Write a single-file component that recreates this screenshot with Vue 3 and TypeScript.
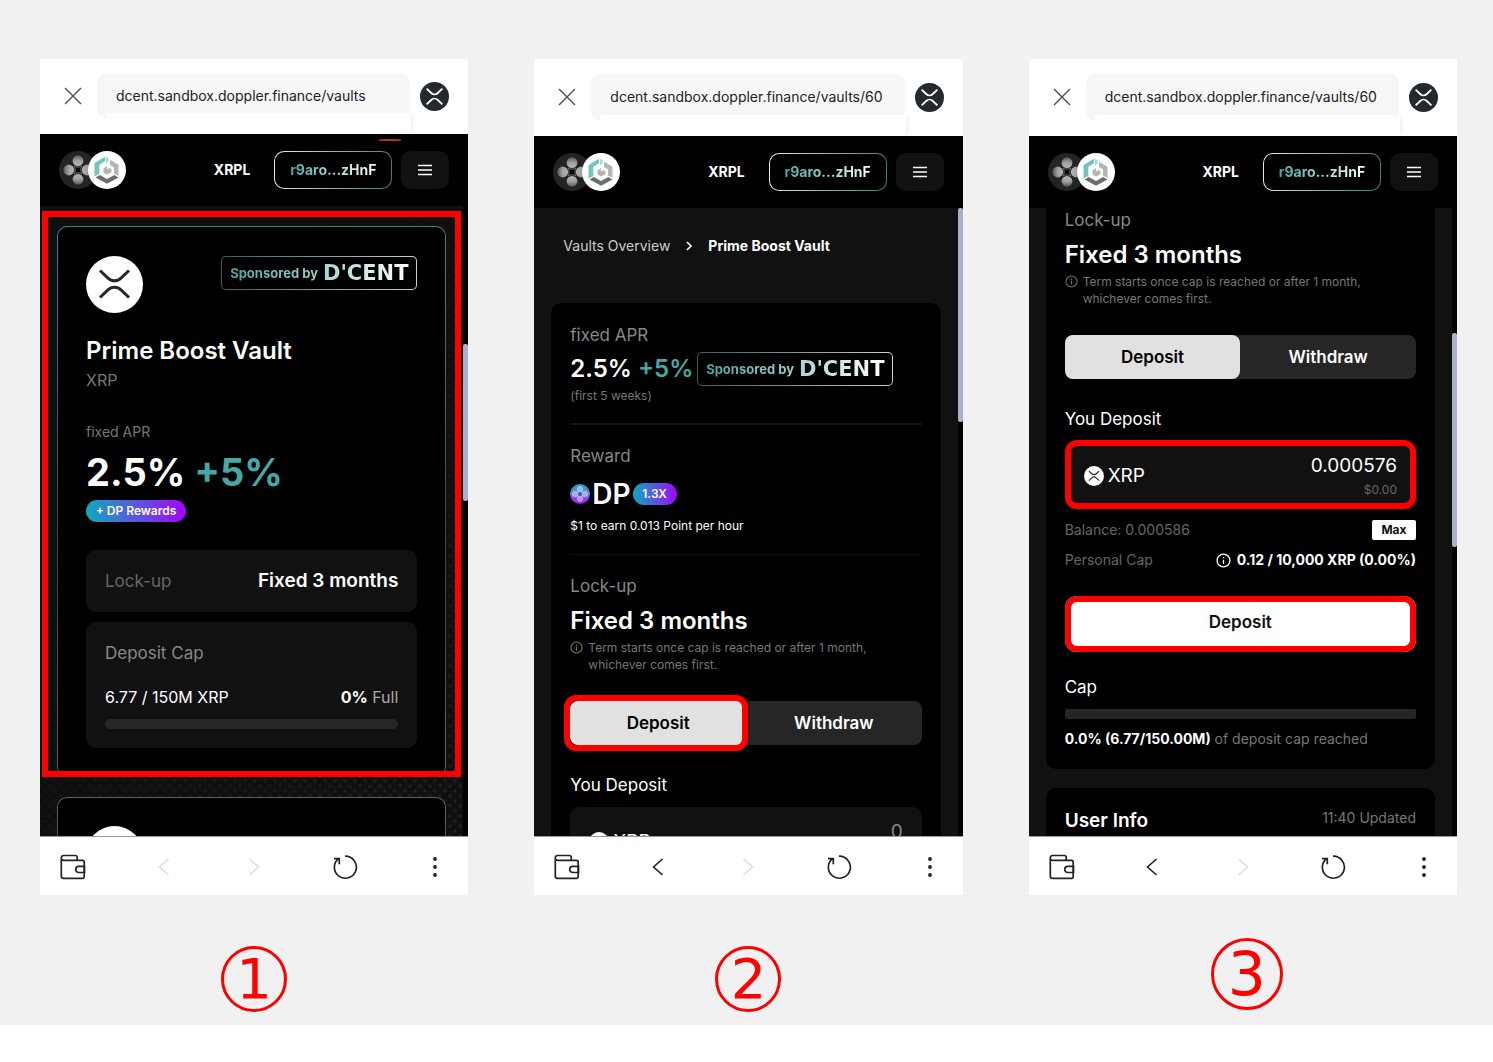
<script setup lang="ts">
interface Phone {
  id: number
  url: string
  canGoBack: boolean
  thumb: { top: number; height: number }
}

const phones: Phone[] = [
  { id: 1, url: 'dcent.sandbox.doppler.finance/vaults', canGoBack: false, thumb: { top: 138, height: 157 } },
  { id: 2, url: 'dcent.sandbox.doppler.finance/vaults/60', canGoBack: true, thumb: { top: 0, height: 214 } },
  { id: 3, url: 'dcent.sandbox.doppler.finance/vaults/60', canGoBack: true, thumb: { top: 125, height: 214 } },
]
</script>

<template>
  <main class="board">
    <section v-for="p in phones" :key="p.id" class="step">
      <div class="phone" :class="'phone-' + p.id">
        <div class="urlbar">
          <button class="plain close" aria-label="Close">
            <svg width="18" height="18" viewBox="0 0 18 18"><path d="M1 1l16 16M17 1L1 17" stroke="#4a4d52" stroke-width="1.4" fill="none" /></svg>
          </button>
          <input class="url" type="text" :value="p.url" readonly aria-label="Address" />
          <span class="flap"></span>
          <svg class="net" viewBox="0 0 57 57" role="img" aria-label="XRP Ledger">
            <circle cx="28.500" cy="28.500" r="28.500" fill="#23292f" />
            <path d="M13 13l9 8.600c3.600 3.600 9.400 3.600 13 0l9-8.600M13 44l9-8.600c3.600-3.600 9.400-3.600 13 0l9 8.600" fill="none" stroke="#fff" stroke-width="3.600" />
          </svg>
        </div>

        <header class="appbar">
          <span v-if="p.id === 1" class="alert"></span>
          <div class="logos">
            <svg width="38" height="38" viewBox="0 0 38 38">
              <defs>
                <radialGradient :id="'petal' + p.id" cx="19" cy="19" r="16" gradientUnits="userSpaceOnUse">
                  <stop offset="0.200" stop-color="#b8b8b8" />
                  <stop offset="0.600" stop-color="#a0a0a0" />
                  <stop offset="1" stop-color="#444" />
                </radialGradient>
              </defs>
              <circle cx="19" cy="19" r="19" fill="#242424" />
              <g :fill="'url(#petal' + p.id + ')'">
                <circle cx="19" cy="9.700" r="5.400" />
                <circle cx="19" cy="28.300" r="5.400" />
                <circle cx="9.700" cy="19" r="5.400" />
                <circle cx="28.300" cy="19" r="5.400" />
              </g>
              <path d="M15 15c2 1.600 6 1.600 8 0-1.600 2-1.600 6 0 8-2-1.600-6-1.600-8 0 1.600-2 1.600-6 0-8z" fill="#080808" stroke="#777" stroke-width="0.800" />
            </svg>
            <svg class="dcent-logo" width="38" height="38" viewBox="0 0 38 38">
              <circle cx="19" cy="19" r="19" fill="#fff" />
              <path d="M6.500 12L17 5.700v4.600l-5.700 3.500V23l-4.800 2.500z" fill="#74c3c0" />
              <path d="M17.800 5.800l2.700 1.200v3.800l-2.700 1.600z" fill="#a5d8d5" />
              <path d="M22 8.800l8.500 4.900V25L26 22.600v-6.400l-4-2.300z" fill="#b4b4b6" />
              <path d="M7.500 26.500l4.300-2.400 7.200 4 7.200-4 4.300 2.400L19 32.700z" fill="#6c6d70" />
              <path d="M15.500 17.200l3.500-2.100v3.300l2.500-1.400 2 1.200v3L19 23.600l-3.500-2z" fill="#b4b4b6" />
            </svg>
          </div>
          <span class="chain">XRPL</span>
          <button class="wallet"><span>r9aro...zHnF</span></button>
          <button class="menu" aria-label="Menu">
            <svg width="16" height="12" viewBox="0 0 16 12"><path d="M1 1.500h14M1 6h14M1 10.500h14" stroke="#fff" stroke-width="1.700" /></svg>
          </button>
        </header>

        <div class="viewport">
          <div v-if="p.id === 1" class="page dotted">
            <article class="vault">
              <div class="vault-head">
                <svg class="coin" viewBox="0 0 57 57">
                  <circle cx="28.500" cy="28.500" r="28.500" fill="#fff" />
                  <path d="M14 14.500l8 7.600c3.600 3.600 9.400 3.600 13 0l8-7.600M14 41.500l8-7.600c3.600-3.600 9.400-3.600 13 0l8 7.600" fill="none" stroke="#23292f" stroke-width="3" />
                </svg>
                <span class="sponsor"><span class="sponsor-text">Sponsored by <b>D'CENT</b></span></span>
              </div>
              <h2>Prime Boost Vault</h2>
              <p class="asset">XRP</p>
              <p class="apr-label">fixed APR</p>
              <p class="apr-big">2.5% <em>+5%</em></p>
              <span class="chip">+ DP Rewards</span>
              <div class="box lock-box">
                <span>Lock-up</span>
                <strong>Fixed 3 months</strong>
              </div>
              <div class="box cap-box">
                <span>Deposit Cap</span>
                <div class="cap-row">
                  <span class="cap-amount">6.77 / 150M XRP</span>
                  <span class="cap-full"><b>0%</b> Full</span>
                </div>
                <div class="bar round"></div>
              </div>
              <span class="mark mark-card"></span>
            </article>
            <article class="vault next-vault">
              <svg class="coin" viewBox="0 0 57 57"><circle cx="28.500" cy="28.500" r="28.500" fill="#fff" /></svg>
            </article>
          </div>

          <div v-else class="page">
            <nav v-if="p.id === 2" class="crumbs" aria-label="Breadcrumb">
              <a href="#">Vaults Overview</a>
              <svg width="8" height="12" viewBox="0 0 8 12"><path d="M2 2l4 4-4 4" fill="none" stroke="#fff" stroke-width="1.600" /></svg>
              <strong>Prime Boost Vault</strong>
            </nav>

            <article class="panel" :class="{ scrolled: p.id === 3 }">
              <template v-if="p.id === 2">
                <p class="label">fixed APR</p>
                <div class="apr-row">
                  <p class="apr-mid">2.5% <em>+5%</em></p>
                  <span class="sponsor"><span class="sponsor-text">Sponsored by <b>D'CENT</b></span></span>
                </div>
                <p class="weeks">(first 5 weeks)</p>
                <hr class="thick" />
                <p class="label">Reward</p>
                <div class="dp-row">
                  <svg width="20" height="20" viewBox="0 0 20 20">
                    <defs>
                      <linearGradient id="dp" x1="0" y1="0" x2="0" y2="1">
                        <stop offset="0" stop-color="#1fa9c4" />
                        <stop offset="0.500" stop-color="#6d7be0" />
                        <stop offset="1" stop-color="#a50cf5" />
                      </linearGradient>
                    </defs>
                    <circle cx="10" cy="10" r="10" fill="url(#dp)" />
                    <g fill="#ffffff66" stroke="#ffffff88" stroke-width="0.600">
                      <circle cx="10" cy="5.200" r="2.800" />
                      <circle cx="10" cy="14.800" r="2.800" />
                      <circle cx="5.200" cy="10" r="2.800" />
                      <circle cx="14.800" cy="10" r="2.800" />
                    </g>
                    <path d="M10 8l2 2-2 2-2-2z" fill="#3f4fb4" />
                  </svg>
                  <strong>DP</strong>
                  <span class="chip chip-x">1.3X</span>
                </div>
                <p class="earn">$1 to earn 0.013 Point per hour</p>
                <hr />
              </template>

              <p class="label">Lock-up</p>
              <h3>Fixed 3 months</h3>
              <div class="term">
                <svg width="13" height="13" viewBox="0 0 14 14" fill="none" stroke="#777" stroke-width="1.100"><circle cx="7" cy="7" r="6" /><path d="M7 6.200v4M7 3.700v1.300" /></svg>
                <p>Term starts once cap is reached or after 1 month, whichever comes first.</p>
              </div>

              <div class="tabs" role="tablist">
                <button role="tab" aria-selected="true" class="tab on">Deposit<span v-if="p.id === 2" class="mark mark-tab"></span></button>
                <button role="tab" aria-selected="false" class="tab">Withdraw</button>
              </div>

              <label class="you" :for="'amount' + p.id">You Deposit</label>
              <div class="field">
                <svg class="mini" viewBox="0 0 57 57">
                  <circle cx="28.500" cy="28.500" r="28.500" fill="#fff" />
                  <path d="M14 14.500l8 7.600c3.600 3.600 9.400 3.600 13 0l8-7.600M14 41.500l8-7.600c3.600-3.600 9.400-3.600 13 0l8 7.600" fill="none" stroke="#23292f" stroke-width="3.400" />
                </svg>
                <span class="ticker">XRP</span>
                <div class="amount">
                  <input :id="'amount' + p.id" type="text" inputmode="decimal" placeholder="0" :value="p.id === 3 ? '0.000576' : ''" />
                  <small><template v-if="p.id === 3">$0.00</template></small>
                </div>
                <span v-if="p.id === 3" class="mark mark-field"></span>
              </div>

              <template v-if="p.id === 3">
                <div class="line">
                  <span>Balance: 0.000586</span>
                  <button class="max">Max</button>
                </div>
                <div class="line">
                  <span>Personal Cap</span>
                  <strong>
                    <svg width="15" height="15" viewBox="0 0 14 14" fill="none" stroke="#fff" stroke-width="1.200"><circle cx="7" cy="7" r="6" /><path d="M7 6.200v4M7 3.700v1.300" /></svg>
                    0.12 / 10,000 XRP (0.00%)
                  </strong>
                </div>
                <button class="submit">Deposit<span class="mark"></span></button>
                <p class="cap-title">Cap</p>
                <div class="bar"></div>
                <p class="reached"><b>0.0% (6.77/150.00M)</b> of deposit cap reached</p>
              </template>
            </article>

            <article v-if="p.id === 3" class="panel user">
              <h4>User Info</h4>
              <span>11:40 Updated</span>
            </article>
          </div>

          <div class="track">
            <div class="thumb" :style="{ marginTop: p.thumb.top + 'px', height: p.thumb.height + 'px' }"></div>
          </div>
        </div>

        <nav class="toolbar" aria-label="Browser">
          <button class="plain" aria-label="Wallet">
            <svg width="26" height="26" viewBox="0 0 26 26" fill="none" stroke="#222" stroke-width="1.700">
              <path d="M17.200 6V3.200a1.700 1.700 0 0 0-1.700-1.700H3.500a2.200 2.200 0 0 0-2.200 2.200v18.500a2.200 2.200 0 0 0 2.200 2.200h19a1.700 1.700 0 0 0 1.700-1.700V8a1.700 1.700 0 0 0-1.700-1.700H3.500A2.200 2.200 0 0 1 1.300 4.500" />
              <path d="M24.500 12.300h-5.700a3.100 3.100 0 0 0 0 6.200h5.700z" />
            </svg>
          </button>
          <button class="plain" aria-label="Back" :disabled="!p.canGoBack">
            <svg width="26" height="26" viewBox="0 0 26 26" fill="none" :stroke="p.canGoBack ? '#222' : '#ddd'" stroke-width="1.600"><path d="M17.500 5l-9 8 9 8" /></svg>
          </button>
          <button class="plain" aria-label="Forward" disabled>
            <svg width="26" height="26" viewBox="0 0 26 26" fill="none" stroke="#ddd" stroke-width="1.600"><path d="M8.500 5l9 8-9 8" /></svg>
          </button>
          <button class="plain" aria-label="Reload">
            <svg width="26" height="26" viewBox="0 0 26 26" fill="none" stroke="#222" stroke-width="1.700">
              <path d="M13 2.200A11 11 0 1 1 6.500 4.600M2 4.600h5.300v5.600" />
            </svg>
          </button>
          <button class="plain" aria-label="More">
            <svg width="26" height="26" viewBox="0 0 26 26" fill="#222"><circle cx="13" cy="5" r="1.900" /><circle cx="13" cy="13" r="1.900" /><circle cx="13" cy="21" r="1.900" /></svg>
          </button>
        </nav>
      </div>
      <div class="number-row"><span class="number" :class="{ large: p.id === 3 }">{{ p.id }}</span></div>
    </section>
  </main>
</template>

<style>
body {
  margin: 0;
  background: #fff;
}
</style>

<style scoped>
* {
  box-sizing: border-box;
}
p,
h2,
h3,
h4 {
  margin: 0;
}
svg {
  display: block;
  flex: none;
}
button,
input {
  font: inherit;
  color: inherit;
  border: 0;
  padding: 0;
  margin: 0;
  background: none;
}
em {
  font-style: normal;
  color: #46a8a6;
}
.board {
  display: flex;
  gap: 66px;
  padding: 59px 36px 13px 40px;
  background: #f1f1f1;
  font-family: Inter, 'Noto Sans', sans-serif;
  font-size: 17px;
  line-height: 20px;
  color: #fff;
}
.step {
  flex: 1;
  min-width: 0;
}
.phone {
  display: flex;
  flex-direction: column;
  height: 836px;
  background: #fff;
}

/* address bar */
.urlbar {
  position: relative;
  display: flex;
  align-items: center;
  height: 77px;
  padding: 14px 19px 15px 24px;
}
.phone-1 .urlbar {
  height: 75px;
}
.close {
  margin-right: 15px;
}
.url {
  flex: 1;
  min-width: 0;
  align-self: stretch;
  margin-right: 10px;
  padding-left: 19px;
  border-radius: 10px;
  background: #f7f7f7;
  color: #222;
  font-size: 14px;
}
.flap {
  position: absolute;
  left: 66px;
  right: 57px;
  bottom: 0;
  height: 21px;
  background: #fff;
  box-shadow: 4px 0 4px -2px #00000012;
}
.net {
  width: 29px;
  height: 29px;
}

/* app header */
.appbar {
  position: relative;
  display: flex;
  align-items: center;
  flex: none;
  height: 72px;
  padding: 0 19px;
  background: #000;
  font-size: 14px;
  font-weight: 700;
}
.alert {
  position: absolute;
  top: 5px;
  right: 67px;
  width: 22px;
  height: 2px;
  border-radius: 50% 50% 0 0;
  background: #b8343a;
}
.logos {
  display: flex;
  margin-right: auto;
}
.dcent-logo {
  margin-left: -9px;
}
.wallet {
  width: 118px;
  height: 38px;
  margin: 0 9px 0 24px;
  border: 1px solid transparent;
  border-radius: 10px;
  background:
    linear-gradient(#000, #000) padding-box,
    linear-gradient(100deg, #e4eeee, #3c7c7b) border-box;
}
.wallet span {
  background: linear-gradient(90deg, #46a8a6, #fff);
  background-clip: text;
  color: transparent;
}
.menu {
  display: flex;
  align-items: center;
  justify-content: center;
  width: 48px;
  height: 38px;
  border-radius: 10px;
  background: #111;
}

/* scrolling area */
.viewport {
  display: flex;
  flex: 1;
  min-height: 0;
  overflow: hidden;
}
.page {
  position: relative;
  flex: 1;
  min-width: 0;
  padding: 0 17px;
  background: #111;
}
.dotted {
  padding-top: 20px;
  background: #0f0f0f;
}
.dotted::before {
  content: '';
  position: absolute;
  inset: 0;
  background-image: radial-gradient(circle, #1d1d1d 1px, transparent 3px), radial-gradient(circle, #1d1d1d 1px, transparent 3px);
  background-size: 10px 10px;
  background-position: 0 0, 5px 5px;
  mask-image: linear-gradient(130deg, transparent 30%, #000 90%);
}
.track {
  width: 5px;
  background: #000;
}
.thumb {
  border-radius: 2px;
  background: #aab0cc;
}

/* red callouts */
.mark {
  position: absolute;
  inset: 0;
  border: 6px solid #f00;
  border-radius: 12px;
  pointer-events: none;
}
.mark-card {
  inset: -16px -16px -1px -16px;
  border-radius: 0;
}
.mark-tab {
  inset: -6px -2px -6px -6px;
}
.mark-field {
  inset: -1px 0 1px;
}

/* vault card */
.vault {
  position: relative;
  padding: 29px 28px 28px;
  border: 1px solid transparent;
  border-radius: 10px;
  background:
    linear-gradient(#000, #000) padding-box,
    linear-gradient(#3f8583, #3a4546 60%, #5a5d5d) border-box;
}
.next-vault {
  height: 120px;
  margin-top: 20px;
  padding-top: 28px;
  background:
    linear-gradient(#000, #000) padding-box,
    linear-gradient(#5c6060, #333) border-box;
}
.vault-head {
  display: flex;
  align-items: flex-start;
  justify-content: space-between;
}
.coin {
  width: 57px;
  height: 57px;
}
.sponsor {
  display: flex;
  align-items: center;
  justify-content: center;
  width: 196px;
  height: 34px;
  border: 1px solid transparent;
  border-radius: 5px;
  background:
    linear-gradient(#000, #000) padding-box,
    linear-gradient(90deg, #2c6362, #c8d2d2) border-box;
  font-size: 13px;
  font-weight: 700;
}
.sponsor-text {
  display: flex;
  align-items: center;
  gap: 5px;
  background: linear-gradient(90deg, #46a8a6, #fff);
  background-clip: text;
  color: transparent;
  white-space: nowrap;
}
.sponsor b {
  font-family: 'DejaVu Sans', sans-serif;
  font-size: 21px;
  font-weight: 700;
}
h2,
h3 {
  font-size: 24px;
  font-weight: 600;
  line-height: 30px;
}
h2 {
  margin-top: 23px;
}
.asset {
  margin-top: 4px;
  font-size: 16px;
  color: #777;
}
.apr-label {
  margin-top: 32px;
  font-size: 14px;
  color: #777;
}
.apr-big {
  margin: 7px 0 5px;
  font-size: 38px;
  font-weight: 700;
  line-height: 46px;
}
.chip {
  display: flex;
  align-items: center;
  justify-content: center;
  width: 100px;
  height: 22px;
  border-radius: 11px;
  background: linear-gradient(90deg, #0fa9c0, #a404fb);
  font-size: 12px;
  font-weight: 600;
}
.box {
  border-radius: 10px;
  background: #111;
  color: #888;
}
.lock-box {
  display: flex;
  align-items: center;
  justify-content: space-between;
  height: 62px;
  margin: 28px 0 10px;
  padding: 0 19px;
  color: #666;
}
.lock-box strong {
  font-size: 19px;
  font-weight: 600;
  color: #fff;
}
.cap-box {
  padding: 21px 19px 19px;
}
.cap-row {
  display: flex;
  justify-content: space-between;
  margin: 24px 0 12px;
  font-size: 16px;
}
.cap-amount,
.cap-full b {
  color: #fff;
}
.cap-full b {
  font-weight: 700;
}
.cap-full {
  color: #aaa;
}
.bar {
  height: 10px;
  border-radius: 2px;
  background: #262626;
}
.round {
  border-radius: 5px;
}

/* vault details */
.crumbs {
  display: flex;
  align-items: center;
  margin: 28px 12px 47px;
  gap: 15px;
  font-size: 14px;
}
.crumbs a {
  color: #ccc;
  text-decoration: none;
}
.crumbs strong {
  font-weight: 700;
}
.panel {
  padding: 22px 19px 20px;
  border-radius: 10px;
  background: #000;
}
.scrolled {
  padding-top: 2px;
  border-radius: 0 0 10px 10px;
}
.label {
  color: #888;
}
.apr-row {
  display: flex;
  align-items: center;
  gap: 4px;
  margin: 7px 0 2px;
}
.apr-mid {
  font-size: 24px;
  font-weight: 600;
  white-space: nowrap;
}
.weeks,
.earn {
  font-size: 12px;
  line-height: 16px;
}
.weeks {
  color: #777;
}
hr {
  height: 1px;
  margin: 20px 0 21px;
  border: 0;
  background: #0d0d0d;
}
hr.thick {
  height: 2px;
  margin: 19px 0 21px;
  background: #161616;
}
.dp-row {
  display: flex;
  align-items: center;
  gap: 2px;
  height: 34px;
  margin: 11px 0 7px;
}
.dp-row strong {
  font-size: 28px;
  font-weight: 600;
}
.chip-x {
  width: 44px;
}
h3 {
  margin: 10px 0 3px;
}
.term {
  display: flex;
  gap: 5px;
  max-width: 310px;
  font-size: 12px;
  line-height: 17px;
  color: #777;
}
.term svg {
  margin-top: 2px;
}
.tabs {
  display: flex;
  height: 44px;
  margin: 28px 0 30px;
  border-radius: 8px;
  background: #262626;
  font-weight: 600;
}
.tab {
  position: relative;
  flex: 1;
  border-radius: 8px;
}
.tab.on {
  background: #e1e1e1;
  color: #000;
}
.you {
  display: block;
}
.field {
  position: relative;
  display: flex;
  align-items: center;
  height: 69px;
  margin: 12px 0 10px;
  padding: 0 19px;
  border-radius: 10px;
  background: #111;
}
.mini {
  width: 20px;
  height: 20px;
}
.ticker {
  margin: 0 auto 0 4px;
  font-size: 19px;
}
.amount {
  display: flex;
  flex-direction: column;
  flex: 1;
  min-width: 0;
  align-items: flex-end;
  gap: 5px;
}
.amount input {
  width: 100%;
  height: 24px;
  font-size: 19px;
  text-align: right;
}
.amount input::placeholder {
  color: #888;
}
.amount small {
  height: 16px;
  font-size: 12px;
  line-height: 16px;
  color: #666;
}
.line {
  display: flex;
  align-items: center;
  justify-content: space-between;
  margin-bottom: 10px;
  font-size: 14px;
  color: #666;
}
.line strong {
  display: flex;
  align-items: center;
  gap: 6px;
  font-weight: 700;
  color: #fff;
}
.max {
  width: 44px;
  height: 20px;
  border-radius: 2px;
  background: #fff;
  color: #111;
  font-size: 12px;
  font-weight: 700;
}
.submit {
  position: relative;
  width: 100%;
  height: 56px;
  margin-top: 16px;
  padding-bottom: 4px;
  border-radius: 12px;
  background: #fff;
  color: #111;
  font-weight: 600;
}
.cap-title {
  margin: 25px 0 12px;
}
.reached {
  margin-top: 10px;
  font-size: 14px;
  color: #777;
}
.reached b {
  font-weight: 700;
  color: #fff;
}
.user {
  display: flex;
  justify-content: space-between;
  margin-top: 19px;
  padding-top: 20px;
  font-size: 14px;
  color: #777;
}
h4 {
  padding-top: 1px;
  font-size: 19px;
  font-weight: 600;
  line-height: 24px;
  color: #fff;
}

/* browser toolbar */
.toolbar {
  position: relative;
  display: flex;
  align-items: center;
  justify-content: space-between;
  flex: none;
  height: 59px;
  padding: 1px 20px 0;
  border-top: 1px solid #999;
  background: #fff;
}

/* step numbers */
.number-row {
  display: flex;
  align-items: flex-end;
  justify-content: center;
  height: 74px;
  margin-top: 43px;
}
.number {
  display: flex;
  align-items: center;
  justify-content: center;
  width: 66px;
  height: 66px;
  border: 3px solid #f00;
  border-radius: 50%;
  font-family: 'DejaVu Sans', sans-serif;
  font-size: 56px;
  color: #f00;
}
.number.large {
  align-self: flex-start;
  width: 72px;
  height: 72px;
  margin-left: 8px;
  font-size: 60px;
}
</style>
